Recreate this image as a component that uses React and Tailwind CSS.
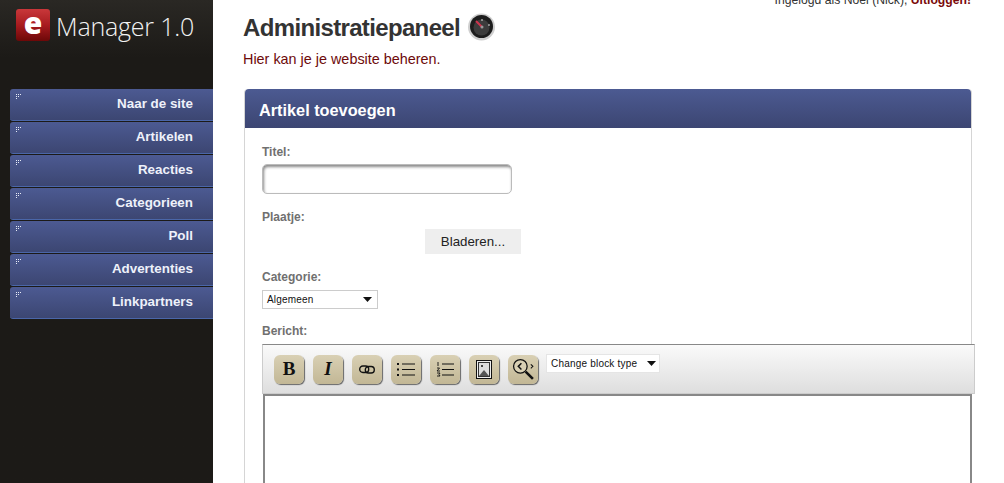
const menu = ['Naar de site', 'Artikelen', 'Reacties', 'Categorieen', 'Poll', 'Advertenties', 'Linkpartners'];

function Dots() {
  return (
    <svg width="7" height="6" viewBox="0 0 7 6" className="absolute left-[6px] top-[5px]" fill="#e8ecf8">
      <rect x="0" y="0" width="1" height="1" />
      <rect x="2" y="0" width="1" height="1" />
      <rect x="4" y="0" width="1" height="1" />
      <rect x="0" y="2" width="1" height="1" />
      <rect x="2" y="2" width="1" height="1" />
      <rect x="0" y="4" width="1" height="1" />
    </svg>
  );
}

function ToolButton({ children }) {
  return (
    <div className="w-[30px] h-[29px] shrink-0 rounded-[6px] flex items-center justify-center bg-gradient-to-b from-[#d9d0b4] to-[#c2b795] shadow-[1px_1px_1px_#666]">
      {children}
    </div>
  );
}

export default function App() {
  return (
    <div className="w-[1004px] h-[483px] overflow-hidden flex bg-white font-['Liberation_Sans',Arial,sans-serif]">
      {/* Sidebar */}
      <div className="w-[213px] h-full shrink-0 bg-gradient-to-b from-[#2a2824] to-[#1c1a17] to-[12%] pl-[10px]">
        <div className="h-[89px] pt-[9px] pl-[6px] flex items-start gap-[6px]">
          <div className="w-[34px] h-[32px] rounded-[3px] bg-gradient-to-b from-[#c9373a] via-[#a81b1f] to-[#6d0808] flex items-center justify-center text-white font-extrabold text-[30px] leading-[32px] pb-[4px] font-['Open_Sans',sans-serif]">
            e
          </div>
          <span className="text-[#f2f2f2] text-[25px] font-light leading-[36px] font-['Open_Sans',sans-serif] -mt-[1px] tracking-[-0.2px]">Manager 1.0</span>
        </div>
        <div className="flex flex-col gap-[1px]">
          {menu.map((item) => (
            <div
              key={item}
              className="relative h-[32px] rounded-l-[3px] bg-gradient-to-b from-[#4c5a92] to-[#3c4672] border-b border-b-[#4a66a8] flex items-center justify-end pr-[20px] text-[#eef1fa] font-bold text-[13.4px]"
            >
              <Dots />
              {item}
            </div>
          ))}
        </div>
      </div>

      {/* Main */}
      <div className="flex-1 min-w-0 relative pl-[30px]">
        <div className="-mt-[7px] h-[14px] pr-[33px] text-right text-[12.2px] leading-[14px] text-[#333]">
          Ingelogd als Noel (Nick), <span className="font-bold text-[#7a0a0a]">Uitloggen!</span>
        </div>
        <div className="flex items-center gap-[8px] h-[30px] mt-[6px]">
          <h1 className="text-[24px] font-bold text-[#333] tracking-[-0.65px]">Administratiepaneel</h1>
          <svg width="27" height="28" viewBox="0 0 27 28" className="-mt-[2px]">
            <circle cx="13.5" cy="14" r="13.5" fill="#cfcfcf" />
            <circle cx="13.5" cy="13.5" r="11.5" fill="#1d1d1d" />
            <circle cx="13.5" cy="14.5" r="8" fill="#3c3c3c" />
            <path d="M8 8l6 6" stroke="#d0344e" strokeWidth="2" />
            <path d="M14 6v2M20 12h2" stroke="#ddd" strokeWidth="1" />
            <circle cx="14" cy="14" r="1.5" fill="#999" />
          </svg>
        </div>
        <p className="text-[14.4px] leading-[16px] mt-[8px] text-[#6d0a0a]">Hier kan je je website beheren.</p>

        <div className="w-[728px] ml-[1px] mt-[22px] rounded-t-[4px] border-x border-[#d5d5d5] h-[500px]">
          <div className="h-[39px] rounded-t-[4px] bg-gradient-to-b from-[#4c5a92] to-[#3c4672] flex items-center pl-[14px] pt-[3px] text-white font-bold text-[16.3px]">
            Artikel toevoegen
          </div>
          <div className="pl-[17px] pt-[17px] text-[12px] font-bold text-[#707070]">
            <div className="leading-[14px]">Titel:</div>
            <div className="mt-[5px] w-[250px] h-[30px] rounded-[5px] border border-[#bbb] bg-white shadow-[inset_1px_2px_3px_#888]" />
            <div className="mt-[16px] leading-[14px]">Plaatje:</div>
            <div className="mt-[5px] ml-[163px] w-[96px] h-[25px] bg-[#eeeeee] flex items-center justify-center text-[13.3px] font-normal text-[#222]">Bladeren...</div>
            <div className="mt-[16px] leading-[14px]">Categorie:</div>
            <div className="mt-[6px] w-[116px] h-[19px] border border-[#ccc] bg-white flex items-center justify-between pl-[4px] pr-[5px] text-[10px] font-normal text-[#111] tracking-[0.2px]">
              Algemeen
              <svg width="9" height="5" viewBox="0 0 9 5"><path d="M0 0h9L4.5 5z" fill="#111" /></svg>
            </div>
            <div className="mt-[15px] leading-[14px]">Bericht:</div>
            <div className="mt-[6px] w-[713px] h-[50px] border border-[#ccc] border-t-[#888] bg-gradient-to-b from-[#fafafa] to-[#dedede] flex items-start gap-[9px] pl-[11px] pt-[10px]">
              <ToolButton>
                <span className="font-['Liberation_Serif',serif] font-bold text-[19px] text-[#111]">B</span>
              </ToolButton>
              <ToolButton>
                <span className="font-['Liberation_Serif',serif] italic font-bold text-[19px] text-[#111]">I</span>
              </ToolButton>
              <ToolButton>
                <svg width="16" height="9" viewBox="0 0 16 9" fill="none" stroke="#111" strokeWidth="1.4">
                  <rect x="0.7" y="1" width="9" height="6.5" rx="3.2" />
                  <rect x="6.3" y="1.5" width="9" height="6.5" rx="3.2" />
                </svg>
              </ToolButton>
              <ToolButton>
                <svg width="18" height="15" viewBox="0 0 18 15" stroke="#111" fill="#111">
                  <path d="M5 2h13M5 7.5h13M5 13h13" strokeWidth="1" />
                  <rect x="0" y="1" width="2" height="2" stroke="none" />
                  <rect x="0" y="6.5" width="2" height="2" stroke="none" />
                  <rect x="0" y="12" width="2" height="2" stroke="none" />
                </svg>
              </ToolButton>
              <ToolButton>
                <svg width="18" height="17" viewBox="0 0 18 17" stroke="#111" fill="none">
                  <path d="M6 3h12M6 8.5h12M6 14h12" strokeWidth="1" />
                  <path d="M2 1v4M1 7h2.5L1 10h3M1 12h3l-1 1.5 1 1.5H1" strokeWidth="0.9" />
                </svg>
              </ToolButton>
              <ToolButton>
                <svg width="16" height="19" viewBox="0 0 16 19">
                  <rect x="0.5" y="0.5" width="15" height="18" fill="#eee" stroke="#111" />
                  <rect x="2.5" y="2.5" width="11" height="14" fill="#ddd" stroke="#333" />
                  <path d="M3 16l5-6 5 6z" fill="#555" />
                  <circle cx="6" cy="6" r="1" fill="#111" />
                </svg>
              </ToolButton>
              <ToolButton>
                <svg width="23" height="23" viewBox="0 0 22 22" fill="none" stroke="#111">
                  <circle cx="8" cy="8" r="6.5" strokeWidth="1.2" fill="#d9d0b4" />
                  <path d="M13 13l7 7" strokeWidth="2.5" />
                  <path d="M9 5l-3 3 3 3" strokeWidth="1.4" />
                  <path d="M18 6l2 2-2 2" strokeWidth="1" />
                </svg>
              </ToolButton>
              <div className="-ml-[1px] -mt-[1px] w-[114px] h-[19px] bg-white border border-[#e5e5e5] flex items-center justify-between pl-[4px] pr-[3px] text-[10px] font-normal text-[#111] tracking-[0.2px]">
                Change block type
                <svg width="9" height="5" viewBox="0 0 9 5"><path d="M0 0h9L4.5 5z" fill="#111" /></svg>
              </div>
            </div>
            <div className="ml-[1px] w-[709px] h-[200px] border-2 border-[#888] border-b-0 bg-white" />
          </div>
        </div>
      </div>
    </div>
  );
}
